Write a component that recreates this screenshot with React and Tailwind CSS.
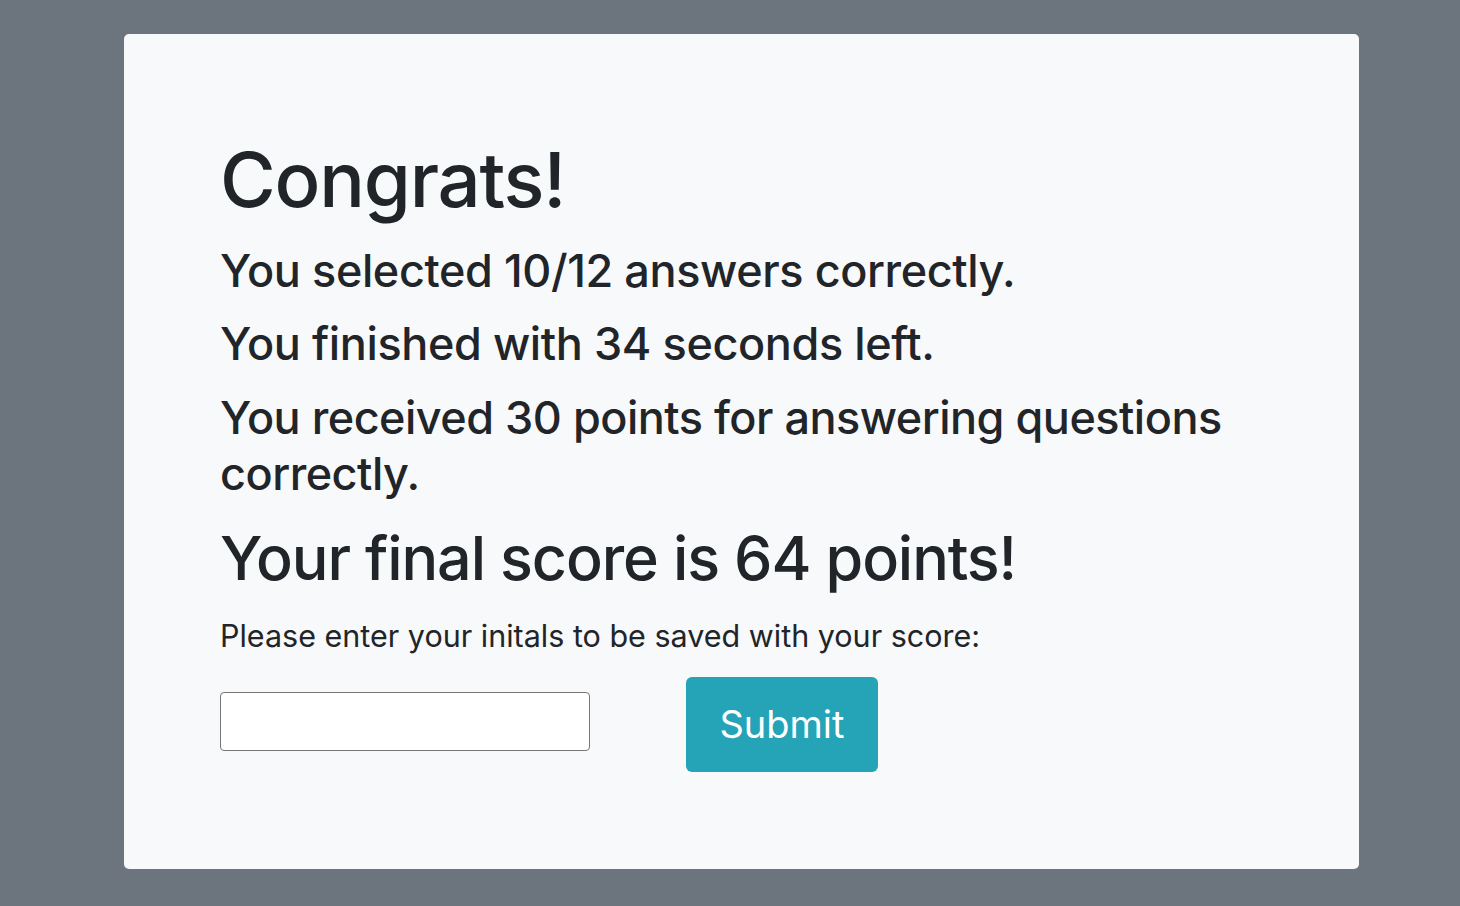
export default function App() {
  return (
    <div className="min-h-screen bg-[#6c757d] pl-[124px] pr-[101px] pt-[34px] pb-[37px]" style={{ fontFamily: "Inter, 'Noto Sans', sans-serif" }}>
      <div className="bg-[#f8f9fa] rounded-[5px] h-[835px] px-[96px] pt-[100px] text-[#212529]">
        <h1 className="text-[76px] leading-[90px] font-medium tracking-[-1.2px]">Congrats!</h1>
        <h3 className="text-[45px] leading-[54px] font-medium mt-[20px] tracking-[-0.4px]">You selected 10/12 answers correctly.</h3>
        <h3 className="text-[45px] leading-[54px] font-medium mt-[19px] tracking-[-0.4px]">You finished with 34 seconds left.</h3>
        <h3 className="text-[45px] leading-[56px] font-medium mt-[19px] tracking-[-0.5px]">
          You received 30 points for answering questions correctly.
        </h3>
        <h2 className="text-[61px] leading-[72px] font-medium mt-[20px] tracking-[-1.1px]">Your final score is 64 points!</h2>
        <p className="text-[30.5px] leading-[40px] mt-[22px] tracking-[0px]">Please enter your initals to be saved with your score:</p>
        <div className="flex items-start gap-[96px] mt-[21px]">
          <input type="text" className="w-[370px] h-[59px] mt-[15px] bg-white border border-[#767676] rounded-[4px]" />
          <button className="w-[192px] h-[95px] bg-[#25a3b7] rounded-[6px] text-white text-[38px]">Submit</button>
        </div>
      </div>
    </div>
  );
}
